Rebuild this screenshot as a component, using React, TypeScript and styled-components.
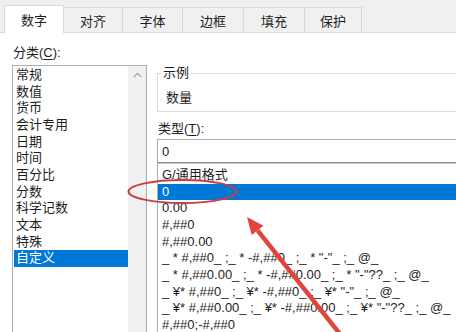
import React from "react";
import styled, { createGlobalStyle } from "styled-components";

const Global = createGlobalStyle`
  html, body { margin: 0; padding: 0; background: #ffffff; }
  body { font-family: "Liberation Sans", "Noto Sans CJK SC", sans-serif; font-size: 13px; color: #1e1e1e; }
  * { box-sizing: border-box; }
`;

const Dialog = styled.div`
  position: relative;
  width: 456px;
  height: 332px;
  overflow: hidden;
  background: #ffffff;
`;

const TabStrip = styled.div`
  display: flex;
  align-items: flex-end;
  height: 33px;
  padding-left: 4px;
  background: #f0f0f0;
  border-bottom: 1px solid #d9d9d9;
`;

const Tab = styled.div<{ $w: number; $active?: boolean }>`
  display: flex;
  align-items: center;
  justify-content: center;
  width: ${(p) => p.$w + 1}px;
  margin-right: -1px;
  height: ${(p) => (p.$active ? 28 : 25)}px;
  margin-bottom: ${(p) => (p.$active ? -1 : 0)}px;
  padding-top: ${(p) => (p.$active ? 0 : 1)}px;
  border: 1px solid #d9d9d9;
  border-bottom: none;
  background: ${(p) => (p.$active ? "#ffffff" : "#f0f0f0")};
  position: relative;
  z-index: ${(p) => (p.$active ? 1 : 0)};
  color: #1e1e1e;
`;

const Body = styled.div`
  display: grid;
  grid-template-columns: 135px 340px;
  column-gap: 10px;
  align-items: start;
  padding-left: 12px;
`;

const Column = styled.div<{ $top: number }>`
  display: flex;
  flex-direction: column;
  padding-top: ${(p) => p.$top}px;
`;

const Label = styled.div<{ $mt?: number; $mb: number }>`
  line-height: 17px;
  height: 17px;
  margin-top: ${(p) => p.$mt ?? 0}px;
  margin-bottom: ${(p) => p.$mb}px;
  padding-left: 1px;
  u { text-decoration: underline; text-underline-offset: 2px; }
`;

const ListBox = styled.div`
  display: flex;
  height: 290px;
  border: 1px solid #abadb3;
  background: #ffffff;
`;

const Items = styled.div`
  flex: 1;
  padding: 1px 0 0 1px;
`;

const Row = styled.div<{ $selected?: boolean; $pad: number }>`
  height: 16.67px;
  line-height: 16.67px;
  padding-left: ${(p) => p.$pad}px;
  white-space: pre;
  background: ${(p) => (p.$selected ? "#0078d7" : "transparent")};
  color: ${(p) => (p.$selected ? "#ffffff" : "#1e1e1e")};
`;

const ScrollBar = styled.div`
  width: 18px;
  background: #f0f0f0;
  display: flex;
  justify-content: center;
  padding-top: 6px;
`;

const GroupBox = styled.fieldset`
  margin: 0;
  padding: 8px 8px 5px 8px;
  border: 1px solid #dcdcdc;
  min-width: 0;
`;

const Legend = styled.legend`
  padding: 0 2px;
  margin-left: -5px;
  line-height: 16px;
`;

const Sample = styled.div`
  line-height: 17px;
  height: 17px;
`;

const TypeInput = styled.div`
  height: 24px;
  border: 1px solid #abadb3;
  border-bottom-color: #8e8f8f;
  padding-left: 4px;
  display: flex;
  align-items: center;
`;

const TypeList = styled.div`
  height: 200px;
  border: 1px solid #abadb3;
  border-top-color: #c8c8c8;
  padding-top: 3px;
`;

const Overlay = styled.svg`
  position: absolute;
  left: 0;
  top: 0;
  pointer-events: none;
`;

const tabs: [string, number][] = [
  ["数字", 59],
  ["对齐", 59],
  ["字体", 60],
  ["边框", 61],
  ["填充", 61],
  ["保护", 57],
];

const categories = [
  "常规",
  "数值",
  "货币",
  "会计专用",
  "日期",
  "时间",
  "百分比",
  "分数",
  "科学记数",
  "文本",
  "特殊",
  "自定义",
];

const formats = [
  "G/通用格式",
  "0",
  "0.00",
  "#,##0",
  "#,##0.00",
  '_ * #,##0_ ;_ * -#,##0_ ;_ * "-"_ ;_ @_ ',
  '_ * #,##0.00_ ;_ * -#,##0.00_ ;_ * "-"??_ ;_ @_ ',
  '_ ¥* #,##0_ ;_ ¥* -#,##0_ ;_ ¥* "-"_ ;_ @_ ',
  '_ ¥* #,##0.00_ ;_ ¥* -#,##0.00_ ;_ ¥* "-"??_ ;_ @_ ',
  "#,##0;-#,##0",
];

export default function App() {
  const tip = { x: 247, y: 217 };
  const tail = { x: 340, y: 334 };
  const dx = tail.x - tip.x;
  const dy = tail.y - tip.y;
  const len = Math.hypot(dx, dy);
  const ux = dx / len;
  const uy = dy / len;
  const hl = 17;
  const hw = 7.5;
  const bx = tip.x + ux * hl;
  const by = tip.y + uy * hl;
  const head = `${tip.x},${tip.y} ${bx - uy * hw},${by + ux * hw} ${bx + uy * hw},${by - ux * hw}`;

  return (
    <Dialog>
      <Global />
      <TabStrip>
        {tabs.map(([t, w], i) => (
          <Tab key={t} $w={w} $active={i === 0}>
            {t}
          </Tab>
        ))}
      </TabStrip>
      <Body>
        <Column $top={11}>
          <Label $mb={4}>
            分类(<u>C</u>):
          </Label>
          <ListBox>
            <Items>
              {categories.map((c) => (
                <Row key={c} $pad={2} $selected={c === "自定义"}>
                  {c}
                </Row>
              ))}
            </Items>
            <ScrollBar>
              <svg width="9" height="6" viewBox="0 0 9 6">
                <path d="M0.8 5 L4.5 1.3 L8.2 5" fill="none" stroke="#a6a6a6" strokeWidth="1.1" />
              </svg>
            </ScrollBar>
          </ListBox>
        </Column>
        <Column $top={32}>
          <GroupBox>
            <Legend>示例</Legend>
            <Sample>数量</Sample>
          </GroupBox>
          <Label $mt={8} $mb={2}>
            类型(<u>T</u>):
          </Label>
          <TypeInput>0</TypeInput>
          <TypeList>
            {formats.map((f) => (
              <Row key={f} $pad={4} $selected={f === "0"}>
                {f}
              </Row>
            ))}
          </TypeList>
        </Column>
      </Body>
      <Overlay width="456" height="332" viewBox="0 0 456 332">
        <ellipse cx="182.5" cy="191.5" rx="54" ry="11.5" fill="none" stroke="#c8403f" strokeWidth="2" />
        <line x1={tail.x} y1={tail.y} x2={bx} y2={by} stroke="#e0443a" strokeWidth="4.5" />
        <polygon points={head} fill="#e0443a" />
      </Overlay>
    </Dialog>
  );
}
